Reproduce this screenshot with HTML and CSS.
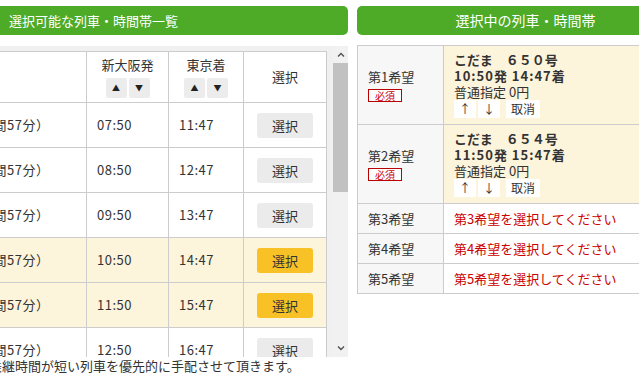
FILE: index.html
```html
<!DOCTYPE html>
<html lang="ja">
<head>
	<meta charset="UTF-8">
	<title>列車・時間帯の選択</title>
	<link rel="stylesheet" href="styles.css">
</head>
<body>
<div class="page">
	<!-- 左：選択可能な列車 -->
	<div class="list-panel">
		<h2 class="bar">選択可能な列車・時間帯一覧</h2>
		<div class="list-box">
			<div class="list-view">
				<table class="list">
					<colgroup>
						<col class="c-name"><col class="c-dep"><col class="c-arr"><col class="c-sel">
					</colgroup>
					<thead>
						<tr>
							<th>列車名</th>
							<th>新大阪発<div class="sort"><a href="#">▲</a><a href="#">▼</a></div></th>
							<th>東京着<div class="sort"><a href="#">▲</a><a href="#">▼</a></div></th>
							<th>選択</th>
						</tr>
					</thead>
					<tbody>
						<tr><td>こだま650号（所要3時間57分）</td><td>07:50</td><td>11:47</td><td><a href="#" class="btn">選択</a></td></tr>
						<tr><td>こだま650号（所要3時間57分）</td><td>08:50</td><td>12:47</td><td><a href="#" class="btn">選択</a></td></tr>
						<tr><td>こだま650号（所要3時間57分）</td><td>09:50</td><td>13:47</td><td><a href="#" class="btn">選択</a></td></tr>
						<tr class="on"><td>こだま650号（所要3時間57分）</td><td>10:50</td><td>14:47</td><td><a href="#" class="btn">選択</a></td></tr>
						<tr class="on"><td>こだま654号（所要3時間57分）</td><td>11:50</td><td>15:47</td><td><a href="#" class="btn">選択</a></td></tr>
						<tr><td>こだま658号（所要3時間57分）</td><td>12:50</td><td>16:47</td><td><a href="#" class="btn">選択</a></td></tr>
						<tr><td>こだま662号（所要3時間57分）</td><td>13:50</td><td>17:47</td><td><a href="#" class="btn">選択</a></td></tr>
					</tbody>
				</table>
			</div>
			<!-- スクロールバー -->
			<div class="vbar">
				<span class="vbar-btn"><svg width="8" height="5" viewBox="0 0 8 5"><path d="M1 4.5 4 1.5 7 4.5" fill="none" stroke="#505050" stroke-width="1.4"/></svg></span>
				<span class="vbar-track"><span class="vbar-thumb"></span></span>
				<span class="vbar-btn"><svg width="8" height="5" viewBox="0 0 8 5"><path d="M1 0.5 4 3.5 7 0.5" fill="none" stroke="#505050" stroke-width="1.4"/></svg></span>
			</div>
		</div>
		<p class="note">※同一時間帯の中では、乗継時間が短い列車を優先的に手配させて頂きます。</p>
	</div>

	<!-- 右：選択中 -->
	<div class="pick-panel">
		<h2 class="bar bar-l">選択中の列車・時間帯</h2>
		<table class="pick">
			<tr class="on">
				<th>第1希望<br><span class="must">必須</span></th>
				<td>
					<b>こだま　６５０号</b>
					<b class="time">10:50発 14:47着</b>
					<span class="fare">普通指定 0円</span>
					<div class="ops"><a href="#">↑</a><a href="#">↓</a><a href="#">取消</a></div>
				</td>
			</tr>
			<tr class="on">
				<th>第2希望<br><span class="must">必須</span></th>
				<td>
					<b>こだま　６５４号</b>
					<b class="time">11:50発 15:47着</b>
					<span class="fare">普通指定 0円</span>
					<div class="ops"><a href="#">↑</a><a href="#">↓</a><a href="#">取消</a></div>
				</td>
			</tr>
			<tr><th>第3希望</th><td class="empty">第3希望を選択してください</td></tr>
			<tr><th>第4希望</th><td class="empty">第4希望を選択してください</td></tr>
			<tr><th>第5希望</th><td class="empty">第5希望を選択してください</td></tr>
		</table>
	</div>
</div>
</body>
</html>
```

FILE: styles.css
```css
body,h2,p,table,th,td{margin:0;padding:0}
body{font:13px/1.4 "Noto Sans CJK JP", sans-serif;color:#333;background:#fff;overflow:hidden}
a{text-decoration:none;color:#333}

.page{
    display:flex;
    gap:9px;
    padding-top:6px;
}

.bar{
    height:29px;
    line-height:29px;
    background:#4dab28;
    color:#fff;
    font-size:13px;
    font-weight:normal;
    text-align:center;
    border-radius:5px;
}
.bar-l{font-size:14px}

/* left */
.list-panel{
    width:509px;
    margin-left:-161px;
    flex:none;
}
.list-box{
    display:flex;
    margin-top:11px;
    height:311px;
    background:#f0f0f0;
}
.list-view{
    flex:1;
    overflow:hidden;
    padding:5px 6px 0 5px;
}
.vbar{
    width:15px;
    display:flex;
    flex-direction:column;
    background:#f1f1f1;
}
.vbar-btn{
    height:17px;
    display:flex;
    align-items:center;
    justify-content:center;
}
.vbar-track{flex:1}
.vbar-thumb{
    display:block;
    height:129px;
    background:#c1c1c1;
}

.list{
    width:482px;
    table-layout:fixed;
    border-collapse:collapse;
    background:#fff;
}
.c-name{width:242px}
.c-dep{width:82px}
.c-arr{width:75px}
.c-sel{width:83px}
.list th,.list td{
    border:1px solid #ccc;
    vertical-align:middle;
}
.list th{
    height:50px;
    font-weight:normal;
    text-align:center;
    line-height:16px;
}
.list td{
    height:44px;
    padding:0 10px;
    white-space:nowrap;
    letter-spacing:.5px;
}
.list td:last-child{text-align:center;padding:0}
.list tr.on td{background:#fdf4dc}

.sort{
    display:flex;
    justify-content:center;
    gap:2px;
    margin-top:5px;
}
.sort a{
    width:21px;
    height:20px;
    line-height:20px;
    background:#ececec;
    border-radius:2px;
    font-size:8px;
    color:#222;
}

.btn{
    display:inline-block;
    width:56px;
    height:25px;
    line-height:25px;
    background:#ebebeb;
    border-radius:3px;
    letter-spacing:0;
}
.list tr.on .btn{background:#f8c227}

.note{
    padding-left:7px;
    margin-top:1px;
    line-height:16px;
    white-space:nowrap;
}

/* right */
.pick-panel{
    width:337px;
    flex:none;
}
.pick{
    width:100%;
    margin-top:10px;
    border-collapse:collapse;
}
.pick th,.pick td{
    border:1px solid #ccc;
    vertical-align:middle;
    text-align:left;
}
.pick th{
    width:75px;
    padding:0 0 0 10px;
    background:#f7f7f7;
    font-weight:normal;
    line-height:17px;
}
.pick td{
    padding:6px 10px 6px;
    line-height:16px;
}
.pick tr.on td{background:#fdf4dc}
.pick b,.pick .fare{display:block}
.pick b.time{letter-spacing:1px}
.pick td.empty{
    color:#c00;
    padding:7px 10px 6px;
    line-height:16px;
}
.must{
    display:inline-block;
    margin-top:4px;
    padding:0 6px;
    border:1px solid #b00;
    background:#fff;
    color:#c00;
    font-size:10px;
    line-height:11px;
}
.ops{
    display:flex;
    gap:2px;
}
.ops a{
    height:18px;
    line-height:18px;
    min-width:22px;
    text-align:center;
    background:#fff;
    font-size:12px;
}
.ops a:last-child{margin-left:4px;padding:0 5px}
```
